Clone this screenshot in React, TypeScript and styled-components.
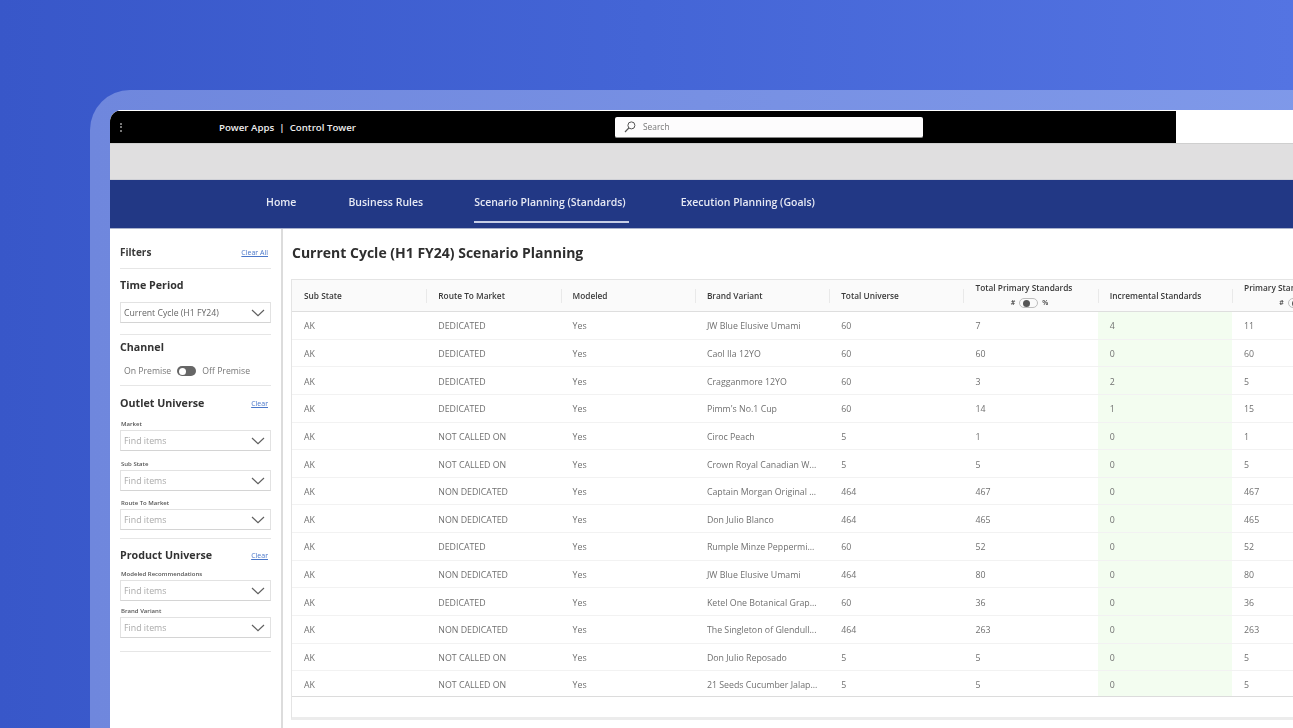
import styled, { createGlobalStyle } from 'styled-components'

const GlobalStyle = createGlobalStyle`
  html, body {
    margin: 0;
    height: 728px;
    overflow: hidden;
    font-family: 'Open Sans', 'Liberation Sans', sans-serif;
  }
  * {
    box-sizing: border-box;
  }
`

const rows = [
  ['AK', 'DEDICATED', 'Yes', 'JW Blue Elusive Umami', '60', '7', '4', '11'],
  ['AK', 'DEDICATED', 'Yes', 'Caol Ila 12YO', '60', '60', '0', '60'],
  ['AK', 'DEDICATED', 'Yes', 'Cragganmore 12YO', '60', '3', '2', '5'],
  ['AK', 'DEDICATED', 'Yes', "Pimm's No.1 Cup", '60', '14', '1', '15'],
  ['AK', 'NOT CALLED ON', 'Yes', 'Ciroc Peach', '5', '1', '0', '1'],
  ['AK', 'NOT CALLED ON', 'Yes', 'Crown Royal Canadian W...', '5', '5', '0', '5'],
  ['AK', 'NON DEDICATED', 'Yes', 'Captain Morgan Original ...', '464', '467', '0', '467'],
  ['AK', 'NON DEDICATED', 'Yes', 'Don Julio Blanco', '464', '465', '0', '465'],
  ['AK', 'DEDICATED', 'Yes', 'Rumple Minze Peppermi...', '60', '52', '0', '52'],
  ['AK', 'NON DEDICATED', 'Yes', 'JW Blue Elusive Umami', '464', '80', '0', '80'],
  ['AK', 'DEDICATED', 'Yes', 'Ketel One Botanical Grap...', '60', '36', '0', '36'],
  ['AK', 'NON DEDICATED', 'Yes', 'The Singleton of Glendull...', '464', '263', '0', '263'],
  ['AK', 'NOT CALLED ON', 'Yes', 'Don Julio Reposado', '5', '5', '0', '5'],
  ['AK', 'NOT CALLED ON', 'Yes', '21 Seeds Cucumber Jalap...', '5', '5', '0', '5'],
]

const Chevron = () => (
  <svg width="14" height="8" viewBox="0 0 14 8" fill="none">
    <path d="M1 1l6 5.6L13 1" stroke="#5f5f5f" strokeWidth="1.2" />
  </svg>
)

const SearchIcon = () => (
  <svg width="12" height="12" viewBox="0 0 12 12" fill="none">
    <circle cx="7.4" cy="4.4" r="3.5" stroke="#555" strokeWidth="1" />
    <path d="M4.8 7L1 11" stroke="#555" strokeWidth="1.1" />
  </svg>
)

const Dropdown = ({ placeholder, value }: { placeholder?: string; value?: string }) => (
  <Select>
    {value ? <SelectValue>{value}</SelectValue> : <SelectHint>{placeholder}</SelectHint>}
    <Chevron />
  </Select>
)

const App = () => (
  <Page>
    <GlobalStyle />
    <Frame>
      <Screen>
        <TopRow>
          <BlackBar>
            <Dots>
              <i />
              <i />
              <i />
            </Dots>
            <AppName>Power Apps&nbsp; | &nbsp;Control Tower</AppName>
            <SearchBox>
              <SearchIcon />
              <span>Search</span>
            </SearchBox>
          </BlackBar>
        </TopRow>
        <GrayBar />
        <Nav>
          <NavItem $gap={52}>Home</NavItem>
          <NavItem $gap={51}>Business Rules</NavItem>
          <NavItem $gap={52} $active>
            Scenario Planning (Standards)
          </NavItem>
          <NavItem>Execution Planning (Goals)</NavItem>
        </Nav>
        <Body>
          <Sidebar>
            <FiltersHead>
              <FiltersTitle>Filters</FiltersTitle>
              <ClearAll>Clear All</ClearAll>
            </FiltersHead>
            <Divider />
            <SectionHead $top={7}>
              <SectionTitle>Time Period</SectionTitle>
            </SectionHead>
            <Dropdown value="Current Cycle (H1 FY24)" />
            <Divider $gap={11} />
            <SectionHead $top={3} $bottom={9}>
              <SectionTitle>Channel</SectionTitle>
            </SectionHead>
            <ChannelRow>
              <span>On Premise</span>
              <Toggle />
              <span>Off Premise</span>
            </ChannelRow>
            <Divider $gap={8} />
            <SectionHead $top={8}>
              <SectionTitle>Outlet Universe</SectionTitle>
              <ClearLink>Clear</ClearLink>
            </SectionHead>
            <FieldLabel>Market</FieldLabel>
            <Dropdown placeholder="Find items" />
            <FieldLabel $top={9}>Sub State</FieldLabel>
            <Dropdown placeholder="Find items" />
            <FieldLabel $top={8}>Route To Market</FieldLabel>
            <Dropdown placeholder="Find items" />
            <Divider $gap={8} />
            <SectionHead $top={7} $bottom={6}>
              <SectionTitle>Product Universe</SectionTitle>
              <ClearLink>Clear</ClearLink>
            </SectionHead>
            <FieldLabel>Modeled Recommendations</FieldLabel>
            <Dropdown placeholder="Find items" />
            <FieldLabel $top={6}>Brand Variant</FieldLabel>
            <Dropdown placeholder="Find items" />
            <Divider $gap={13} />
          </Sidebar>
          <Main>
            <PageTitle>Current Cycle (H1 FY24) Scenario Planning</PageTitle>
            <Table>
              <HeadRow>
                <HeadCell>Sub State</HeadCell>
                <HeadCell>Route To Market</HeadCell>
                <HeadCell>Modeled</HeadCell>
                <HeadCell>Brand Variant</HeadCell>
                <HeadCell>Total Universe</HeadCell>
                <HeadCell $stacked>
                  Total Primary Standards
                  <UnitSwitch>
                    # <MiniToggle /> %
                  </UnitSwitch>
                </HeadCell>
                <HeadCell>Incremental Standards</HeadCell>
                <HeadCell $stacked>
                  Primary Standards
                  <UnitSwitch>
                    # <MiniToggle /> %
                  </UnitSwitch>
                </HeadCell>
              </HeadRow>
              {rows.map((row, i) => (
                <Row key={i}>
                  {row.map((cell, j) => (
                    <Cell key={j} $green={j === 6}>
                      {cell}
                    </Cell>
                  ))}
                </Row>
              ))}
              <TableFooter />
            </Table>
          </Main>
        </Body>
      </Screen>
    </Frame>
  </Page>
)

const Page = styled.div`
  width: 1293px;
  height: 728px;
  overflow: hidden;
  padding: 90px 0 0 90px;
  background: linear-gradient(90deg, #3857c9 0%, #4465d6 50%, #5474e2 100%);
`

const Frame = styled.div`
  width: 1300px;
  height: 700px;
  padding: 20px 0 0 20px;
  border-radius: 40px 0 0 0;
  background: linear-gradient(90deg, #6f87dd 0%, #809aea 100%);
`

const Screen = styled.div`
  width: 1280px;
  height: 680px;
  overflow: hidden;
  border-radius: 12px 0 0 0;
  background: #fff;
  filter: blur(0.7px);
`

const TopRow = styled.div`
  height: 34px;
  padding-top: 1px;
  background: #fff;
  border-bottom: 1px solid #cfcfcf;
`

const BlackBar = styled.div`
  display: flex;
  align-items: center;
  width: 1066px;
  height: 32px;
  background: #000;
`

const Dots = styled.div`
  display: flex;
  flex-direction: column;
  gap: 1.5px;
  margin-left: 10px;
  i {
    width: 2px;
    height: 2px;
    background: #777;
  }
`

const AppName = styled.div`
  margin-left: 97px;
  width: 396px;
  font-size: 9.7px;
  font-weight: 600;
  color: #eee;
  white-space: nowrap;
`

const SearchBox = styled.div`
  display: flex;
  align-items: center;
  gap: 7px;
  width: 308px;
  height: 21px;
  padding-left: 9px;
  border-radius: 2px;
  background: #fdfcfd;
  border-bottom: 1px solid #888;
  font-size: 8.4px;
  color: #777;
`

const GrayBar = styled.div`
  height: 36px;
  background: #e0dfe0;
  border-bottom: 1px solid #cfd0d6;
`

const Nav = styled.div`
  display: flex;
  height: 49px;
  padding-left: 156px;
  background: #223885;
  border-bottom: 1px solid #aab2cd;
`

const NavItem = styled.div<{ $active?: boolean; $gap?: number }>`
  display: flex;
  align-items: center;
  height: 43px;
  margin-right: ${({ $gap }) => $gap ?? 0}px;
  padding: 2px ${({ $active }) => ($active ? '3px' : '0')} 0 0;
  font-size: 10.5px;
  font-weight: 600;
  color: #e6e9f4;
  white-space: nowrap;
  border-bottom: 2px solid ${({ $active }) => ($active ? '#c6cde6' : 'transparent')};
`

const Body = styled.div`
  display: flex;
  height: 500px;
`

const Sidebar = styled.aside`
  flex: none;
  width: 173px;
  padding: 15px 10px 0 10px;
  border-right: 2px solid #dcdcdc;
`

const FiltersHead = styled.div`
  display: flex;
  align-items: center;
  justify-content: space-between;
  height: 16px;
  padding-right: 3px;
`

const FiltersTitle = styled.div`
  font-size: 10px;
  font-weight: 700;
  color: #3a3a3a;
`

const ClearAll = styled.span`
  font-size: 7px;
  color: #4a77c9;
  text-decoration: underline;
`

const Divider = styled.div<{ $gap?: number }>`
  height: 1px;
  margin: ${({ $gap }) => $gap ?? 8}px 0 0;
  background: #e6e6e6;
`

const SectionHead = styled.div<{ $top?: number; $bottom?: number }>`
  display: flex;
  align-items: center;
  justify-content: space-between;
  height: 18px;
  margin-top: ${({ $top }) => $top ?? 8}px;
  margin-bottom: ${({ $bottom }) => $bottom ?? 8}px;
  padding-right: 3px;
`

const SectionTitle = styled.div`
  font-size: 10.7px;
  font-weight: 700;
  color: #333;
  white-space: nowrap;
`

const ClearLink = styled.span`
  font-size: 7px;
  color: #4a77c9;
  text-decoration: underline;
`

const FieldLabel = styled.div<{ $top?: number }>`
  height: 8px;
  margin-top: ${({ $top }) => $top ?? 0}px;
  margin-bottom: 2px;
  margin-left: 1px;
  font-size: 6px;
  line-height: 8px;
  font-weight: 600;
  color: #555;
  white-space: nowrap;
`

const Select = styled.div`
  display: flex;
  align-items: center;
  justify-content: space-between;
  width: 151px;
  height: 21px;
  padding: 0 5px 0 3px;
  background: #fff;
  border: 1px solid #e2e2e2;
  border-bottom-color: #d4d4d4;
`

const SelectValue = styled.span`
  font-size: 8.7px;
  color: #666;
  white-space: nowrap;
`

const SelectHint = styled.span`
  font-size: 8.8px;
  color: #aaa;
  white-space: nowrap;
`

const ChannelRow = styled.div`
  display: flex;
  align-items: center;
  gap: 6px;
  height: 12px;
  padding-left: 4px;
  font-size: 8.7px;
  color: #777;
  white-space: nowrap;
`

const Toggle = styled.span`
  position: relative;
  flex: none;
  width: 19px;
  height: 10px;
  border-radius: 5px;
  background: #666;
  &::after {
    content: '';
    position: absolute;
    top: 1.5px;
    left: 2px;
    width: 7px;
    height: 7px;
    border-radius: 50%;
    background: #fff;
  }
`

const Main = styled.main`
  flex: 1;
  min-width: 0;
  padding: 13px 0 0 8px;
`

const PageTitle = styled.h1`
  margin: 0 0 15px 1px;
  height: 22px;
  font-size: 14px;
  line-height: 22px;
  font-weight: 700;
  color: #2e2e2e;
  white-space: nowrap;
`

const Table = styled.div`
  width: 1080px;
  border: 1px solid #e4e4e4;
  border-right: none;
  border-bottom: 3px solid #ececec;
`

const columns = 'repeat(8, 134.3px)'

const HeadRow = styled.div`
  display: grid;
  grid-template-columns: ${columns};
  height: 32px;
  background: #fafafa;
  border-bottom: 1px solid #dedede;
`

const HeadCell = styled.div<{ $stacked?: boolean }>`
  display: flex;
  flex-direction: ${({ $stacked }) => ($stacked ? 'column' : 'row')};
  align-items: ${({ $stacked }) => ($stacked ? 'flex-start' : 'center')};
  justify-content: ${({ $stacked }) => ($stacked ? 'center' : 'flex-start')};
  padding-left: 12px;
  font-size: 8.3px;
  line-height: 10px;
  font-weight: 600;
  color: #3a3a3a;
  white-space: nowrap;
  background: linear-gradient(#e9e9e9, #e9e9e9) left center / 1px 14px no-repeat;
  &:first-child {
    background: none;
  }
`

const UnitSwitch = styled.div`
  display: flex;
  align-items: center;
  justify-content: center;
  gap: 4px;
  width: 108px;
  margin-top: 5px;
  font-size: 7px;
`

const MiniToggle = styled.span`
  position: relative;
  width: 19px;
  height: 10px;
  border-radius: 5px;
  border: 1px solid #bdbdbd;
  &::after {
    content: '';
    position: absolute;
    top: 0.5px;
    left: 3px;
    width: 7px;
    height: 7px;
    border-radius: 50%;
    background: #555;
  }
`

const Row = styled.div`
  display: grid;
  grid-template-columns: ${columns};
  height: 27.65px;
  border-bottom: 1px solid #f2f2f2;
  &:nth-child(15) {
    height: 25.5px;
    border-bottom-color: #dcdcdc;
  }
`

const Cell = styled.div<{ $green?: boolean }>`
  display: flex;
  align-items: center;
  padding: 2px 0 0 12px;
  font-size: 8.8px;
  color: #707070;
  white-space: nowrap;
  background: ${({ $green }) => ($green ? '#f3fdf0' : 'transparent')};
`

const TableFooter = styled.div`
  height: 20px;
  background: #fff;
`

export default App
